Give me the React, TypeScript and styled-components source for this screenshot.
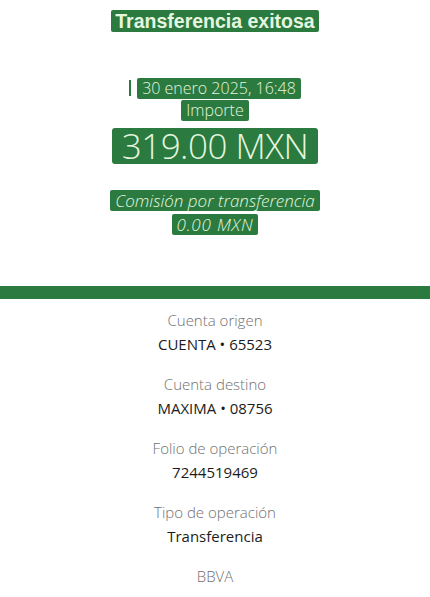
import styled, { createGlobalStyle } from "styled-components";

const GlobalStyle = createGlobalStyle`
  body {
    margin: 0;
    background: #ffffff;
    font-family: "Open Sans", "Liberation Sans", sans-serif;
  }
`;

const green = "#2b7a3f";
const onGreen = "#e4f6df";

const details = [
  { label: "Cuenta origen", value: "CUENTA • 65523" },
  { label: "Cuenta destino", value: "MAXIMA • 08756" },
  { label: "Folio de operación", value: "7244519469" },
  { label: "Tipo de operación", value: "Transferencia" },
];

const App = () => {
  return (
    <Page>
      <GlobalStyle />
      <Header>
        <Line $height={22} $top={0}>
          <Title>Transferencia exitosa</Title>
        </Line>
        <Line $height={20} $top={46}>
          <Tick />
          <Tag $size={16}>30 enero 2025, 16:48</Tag>
        </Line>
        <Line $height={20} $top={2}>
          <Tag $size={16}>Importe</Tag>
        </Line>
        <Line $height={36} $top={8}>
          <Amount>319.00 MXN</Amount>
        </Line>
        <Line $height={22} $top={25}>
          <Tag $size={17} $italic>
            Comisión por transferencia
          </Tag>
        </Line>
        <Line $height={24} $top={1}>
          <Tag $size={17} $italic $spacing={0.8}>
            0.00 MXN
          </Tag>
        </Line>
      </Header>
      <Bar />
      <Details>
        {details.map((d) => (
          <Item key={d.label}>
            <Label>{d.label}</Label>
            <Value>{d.value}</Value>
          </Item>
        ))}
        <Item>
          <Label>BBVA</Label>
        </Item>
      </Details>
    </Page>
  );
};

export default App;

const Page = styled.div`
  width: 430px;
  min-height: 597px;
  background: #ffffff;
`;

const Header = styled.section`
  display: flex;
  flex-direction: column;
  align-items: center;
  padding-top: 10px;
`;

const Line = styled.div<{ $height: number; $top: number }>`
  height: ${(p) => p.$height}px;
  margin-top: ${(p) => p.$top}px;
  display: flex;
  align-items: center;
  justify-content: center;
  gap: 2px;
`;

const Title = styled.span`
  display: inline-block;
  background: ${green};
  color: ${onGreen};
  font-family: "Liberation Sans", Arial, sans-serif;
  font-weight: 700;
  font-size: 19.5px;
  line-height: 22px;
  padding: 0 4px;
  border-radius: 2px;
`;

const Tag = styled.span<{ $size: number; $italic?: boolean; $spacing?: number }>`
  display: inline-block;
  background: ${green};
  color: ${onGreen};
  font-weight: 300;
  font-size: ${(p) => p.$size}px;
  font-style: ${(p) => (p.$italic ? "italic" : "normal")};
  letter-spacing: ${(p) => p.$spacing ?? 0}px;
  line-height: 21px;
  padding: 0 5px;
  border-radius: 2px;
`;

const Tick = styled.span`
  width: 2px;
  height: 16px;
  background: ${green};
  margin-right: 4px;
`;

const Amount = styled.span`
  display: inline-block;
  background: ${green};
  color: ${onGreen};
  font-weight: 300;
  font-size: 35px;
  line-height: 36px;
  letter-spacing: -0.5px;
  padding: 0 10px;
  border-radius: 3px;
`;

const Bar = styled.div`
  height: 13px;
  margin-top: 50px;
  background: ${green};
`;

const Details = styled.section`
  display: flex;
  flex-direction: column;
  align-items: center;
  gap: 20px;
  padding-top: 11px;
`;

const Item = styled.div`
  display: flex;
  flex-direction: column;
  align-items: center;
  gap: 4px;
`;

const Label = styled.div`
  font-size: 15px;
  line-height: 20px;
  font-weight: 300;
  color: #6f6f6f;
`;

const Value = styled.div`
  font-size: 15px;
  line-height: 20px;
  font-weight: 400;
  color: #1c1c1c;
`;
